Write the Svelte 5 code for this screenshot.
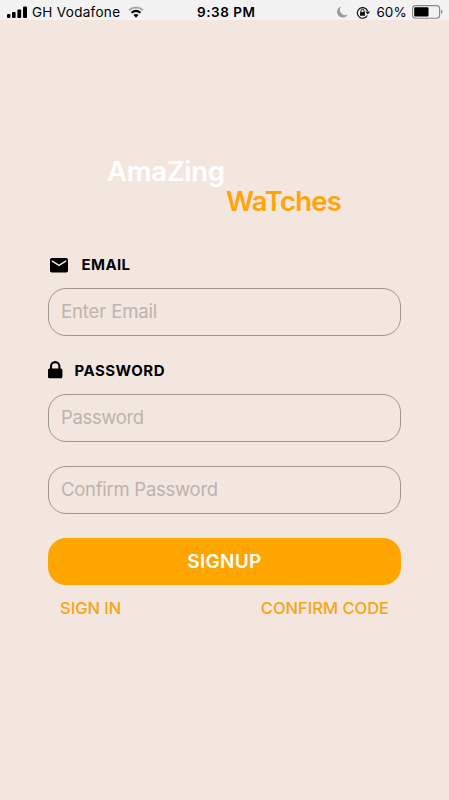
<script>
  let email = $state('');
  let password = $state('');
  let confirmation = $state('');
</script>

<div class="screen">
  <header class="status">
    <svg class="signal" width="21" height="12" viewBox="0 0 21 12">
      <rect x="0" y="8" width="3.4" height="4" rx="1" />
      <rect x="5" y="6" width="3.6" height="6" rx="1" />
      <rect x="10.4" y="3.5" width="3.8" height="8.5" rx="1" />
      <rect x="16" y="0.5" width="4" height="11.5" rx="1" />
    </svg>
    <span class="carrier">GH Vodafone</span>
    <svg class="wifi" width="16" height="12" viewBox="0 0 16 12" fill="none">
      <path d="M1 4.2C5 .5 11 .5 15 4.2" stroke="#aaa" stroke-width="2.1" />
      <path d="M3.5 6.8C6.3 4.4 9.7 4.4 12.5 6.8" stroke="#000" stroke-width="2.1" />
      <path d="M5.5 9C7 7.8 9 7.8 10.5 9L8 11.7z" fill="#000" />
    </svg>
    <span class="time">9:38 PM</span>
    <div class="right">
      <svg class="moon" width="11" height="12" viewBox="0 0 11 12">
        <path d="M4.2.5A5.6 5.6 0 1 0 10.7 8.4 5.2 5.2 0 0 1 4.2.5z" fill="#999" />
      </svg>
      <svg class="rotation" width="14" height="13" viewBox="0 0 14 13" fill="none">
        <path d="M11.3 9.5A5.3 5.3 0 1 1 11.6 5" stroke="#111" stroke-width="1.2" />
        <path d="M9.4 5.5H14L11.8 8.5z" fill="#111" />
        <rect x="4" y="6" width="5" height="3.7" rx=".5" fill="#111" />
        <path d="M5 6V4.8a1.5 1.5 0 0 1 3 0V6" stroke="#111" />
      </svg>
      <span class="percent">60%</span>
      <svg class="battery" width="31" height="14" viewBox="0 0 31 14">
        <rect x=".6" y=".6" width="27" height="12.6" rx="3" fill="none" stroke="#888" stroke-width="1.1" />
        <rect x="2.2" y="2.2" width="14.3" height="9.4" rx="1" />
        <path d="M29 4.5c2 .8 2 3.7 0 4.5z" fill="#888" />
      </svg>
    </div>
  </header>

  <main>
    <h1><span class="first">AmaZing</span><span class="second">WaTches</span></h1>

    <label class="heading" for="email">
      <svg class="mail" width="18" height="15" viewBox="0 0 18 15">
        <path fill-rule="evenodd" d="M1.8 0H16.2Q18 0 18 1.8V12.7Q18 14.5 16.2 14.5H1.8Q0 14.5 0 12.7V1.8Q0 0 1.8 0zM1.8 2V3.7L9 8.2 16.2 3.7V2L9 6.5z" />
      </svg>
      <span class="email-text">EMAIL</span>
    </label>
    <input id="email" placeholder="Enter Email" bind:value={email} />

    <label class="heading second-heading" for="password">
      <svg class="lock" width="15" height="18" viewBox="0 0 15 18">
        <rect x="0" y="7.5" width="14.4" height="9.8" rx="1.6" />
        <path d="M3 8V5.3a4.2 4.2 0 0 1 8.4 0V8" fill="none" stroke="#000" stroke-width="2.1" />
      </svg>
      <span class="password-text">PASSWORD</span>
    </label>
    <input id="password" class="pw" type="password" placeholder="Password" bind:value={password} />
    <input class="confirm" type="password" placeholder="Confirm Password" bind:value={confirmation} />

    <button class="signup"><span>SIGNUP</span></button>
    <nav>
      <button class="link signin">SIGN IN</button>
      <button class="link code">CONFIRM CODE</button>
    </nav>
  </main>
</div>

<style>
  :global(body) { background: #f2e6df; }
  .screen {
    width: 100%;
    height: 800px;
    overflow: hidden;
    background: #f2e6df;
    font-family: Inter, "Liberation Sans", sans-serif;
    color: #000;
  }
  svg { display: block; flex: none; }
  .status {
    box-sizing: border-box;
    height: 20px;
    display: flex;
    padding: 5px 7px 0;
    background: #f2f2f2;
    font-size: 13.5px;
    line-height: 14px;
    white-space: nowrap;
  }
  .signal { margin-top: 1px; }
  .carrier { width: 90px; margin: 0 6px 0 4px; letter-spacing: 0.3px; }
  .wifi { margin-top: 1px; }
  .time { margin-left: 53px; font-weight: 600; letter-spacing: 0.55px; }
  .right { display: flex; margin-left: auto; }
  .moon { margin: 1px 8px 0 0; }
  .rotation { margin: 1px 7px 0 0; }
  .percent { width: 31px; margin-right: 4px; }
  .battery { margin-right: -0.5px; }
  main { padding: 136px 48px 0; display: flex; flex-direction: column; }
  h1 {
    margin: 0 0 36px;
    display: flex;
    flex-direction: column;
    font-size: 27.5px;
    line-height: 30px;
    font-weight: 600;
  }
  .first { color: #fff; margin-left: 59px; letter-spacing: -0.3px; }
  .second { color: #ffa50a; margin-left: 178px; letter-spacing: -0.8px; }
  .heading {
    display: flex;
    align-items: center;
    height: 25px;
    font-size: 15px;
    font-weight: 700;
  }
  .mail { margin: 1px 14px 0 1.5px; }
  .lock { margin-right: 11.5px; }
  .email-text { letter-spacing: 0.4px; }
  .password-text { letter-spacing: 0.5px; }
  .second-heading { margin-top: 22px; height: 24px; }
  input {
    box-sizing: border-box;
    width: 353px;
    height: 48px;
    margin: 11px 0 0;
    padding: 0 12px 2px;
    border: 1px solid #a0968d;
    border-radius: 18px;
    outline: none;
    background: transparent;
    font: 400 18.5px Inter, "Liberation Sans", sans-serif;
    letter-spacing: -0.12px;
    color: #000;
  }
  input::placeholder { color: #bdb3af; opacity: 1; }
  .pw { margin-top: 12px; letter-spacing: -0.35px; }
  .confirm { margin-top: 24px; letter-spacing: -0.27px; }
  button { border: 0; font-family: inherit; padding: 0; }
  .signup {
    width: 353px;
    height: 47px;
    margin-top: 24px;
    border-radius: 18px;
    background: #ffa500;
    color: #fff;
    font-size: 19px;
    font-weight: 600;
    letter-spacing: 0.3px;
  }
  nav { display: flex; justify-content: space-between; padding: 12px 12px 0; }
  .link { height: 22px; background: none; color: #f5a415; font-size: 16.5px; font-weight: 500; white-space: nowrap; }
</style>
